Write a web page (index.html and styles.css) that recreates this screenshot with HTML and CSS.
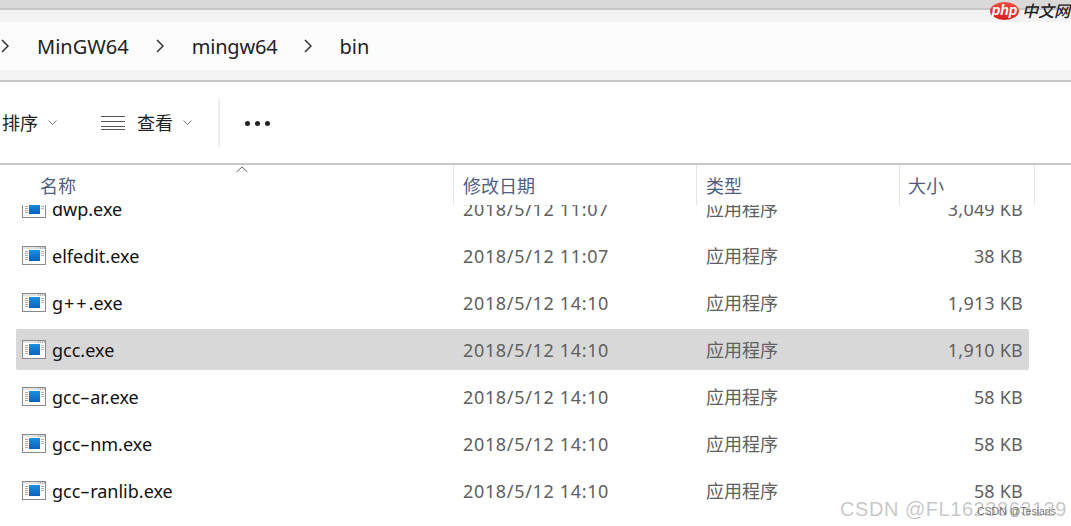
FILE: index.html
```html
<!DOCTYPE html>
<html lang="zh-CN">
<head>
<meta charset="utf-8">
<title>bin</title>
<link rel="stylesheet" href="styles.css">
</head>
<body>
<svg class="defs" width="0" height="0" aria-hidden="true">
  <defs>
    <linearGradient id="blue" x1="0" y1="0" x2="0" y2="1"><stop offset="0" stop-color="#1c8fe0"/><stop offset="1" stop-color="#0a62b8"/></linearGradient>
    <symbol id="exe" viewBox="0 0 24 19">
      <rect x="0.5" y="0.5" width="23" height="18" fill="#fdfdfd" stroke="#8a8a8a"/>
      <rect x="1" y="1" width="22" height="2" fill="#e4e4e4"/>
      <path d="M16 2h1M18 2h1M20 2h1M22 2h1" stroke="#8a8a8a"/>
      <path d="M3 5.500h3M3 7.500h3M3 9.500h3M3 11.500h3M3 13.500h3" stroke="#a8a8a8"/>
      <path d="M19 5.500h3M19 7.500h3M19 9.500h3" stroke="#b4b4b4"/>
      <rect x="7" y="4" width="11" height="11" fill="url(#blue)"/>
    </symbol>
  </defs>
</svg>

<header class="titlebar"></header>

<nav class="addressbar">
  <div class="crumbs">
    <svg class="sep sep-first" viewBox="0 0 8 14"><path d="M1 1l6 6-6 6"/></svg>
    <span class="crumb">MinGW64</span>
    <svg class="sep" viewBox="0 0 8 14"><path d="M1 1l6 6-6 6"/></svg>
    <span class="crumb crumb-tight">mingw64</span>
    <svg class="sep" viewBox="0 0 8 14"><path d="M1 1l6 6-6 6"/></svg>
    <span class="crumb">bin</span>
  </div>
</nav>

<section class="toolbar">
  <span class="tool-label tool-sort">排序</span>
  <svg class="caret" viewBox="0 0 9 5"><path d="M0.500 0.500l4 4 4-4"/></svg>
  <svg class="lines" viewBox="0 0 24 16"><path d="M0 1.500h24M0 6.500h24M0 11.500h24M0 14.500h24"/></svg>
  <span class="tool-label">查看</span>
  <svg class="caret" viewBox="0 0 9 5"><path d="M0.500 0.500l4 4 4-4"/></svg>
  <div class="divider"></div>
  <div class="more"><i></i><i></i><i></i></div>
</section>

<section class="table">
  <svg class="sort-arrow" viewBox="0 0 12 7"><path d="M0.500 6l5.500-5 5.500 5"/></svg>
  <div class="thead">
    <div class="th c-name">名称</div>
    <div class="th c-date">修改日期</div>
    <div class="th c-type">类型</div>
    <div class="th c-size">大小</div>
    <div class="th c-end"></div>
  </div>
  <div class="tbody">
    <div class="row"><div class="c-name name"><svg class="icon"><use href="#exe"/></svg>dwp.exe</div><div class="c-date cell">2018/5/12 11:07</div><div class="c-type cell">应用程序</div><div class="c-size cell">3,049 KB</div></div>
    <div class="row"><div class="c-name name"><svg class="icon"><use href="#exe"/></svg>elfedit.exe</div><div class="c-date cell">2018/5/12 11:07</div><div class="c-type cell">应用程序</div><div class="c-size cell">38 KB</div></div>
    <div class="row"><div class="c-name name"><svg class="icon"><use href="#exe"/></svg><span>g<span class="plus">++</span>.exe</span></div><div class="c-date cell">2018/5/12 14:10</div><div class="c-type cell">应用程序</div><div class="c-size cell">1,913 KB</div></div>
    <div class="row selected"><div class="c-name name"><svg class="icon"><use href="#exe"/></svg>gcc.exe</div><div class="c-date cell">2018/5/12 14:10</div><div class="c-type cell">应用程序</div><div class="c-size cell">1,910 KB</div></div>
    <div class="row"><div class="c-name name"><svg class="icon"><use href="#exe"/></svg><span>gcc<span class="hyphen">-</span>ar.exe</span></div><div class="c-date cell">2018/5/12 14:10</div><div class="c-type cell">应用程序</div><div class="c-size cell">58 KB</div></div>
    <div class="row"><div class="c-name name"><svg class="icon"><use href="#exe"/></svg><span>gcc<span class="hyphen">-</span>nm.exe</span></div><div class="c-date cell">2018/5/12 14:10</div><div class="c-type cell">应用程序</div><div class="c-size cell">58 KB</div></div>
    <div class="row"><div class="c-name name"><svg class="icon"><use href="#exe"/></svg><span>gcc<span class="hyphen">-</span>ranlib.exe</span></div><div class="c-date cell">2018/5/12 14:10</div><div class="c-type cell">应用程序</div><div class="c-size cell">58 KB</div></div>
  </div>
</section>

<div class="php-mark"><span class="php-badge">php</span><span class="php-text">中文网</span></div>
<div class="wm-csdn">CSDN @FL1623863129</div>
<div class="wm-small">CSDN @Tesiaris</div>
</body>
</html>
```

FILE: styles.css
```css
* { box-sizing: border-box; }
html, body { margin: 0; padding: 0; }
body {
  width: 1071px;
  height: 526px;
  overflow: hidden;
  position: relative;
  background: #fff;
  color: #1a1a1a;
  font-family: "Noto Sans", "Noto Sans CJK SC", sans-serif;
}
.defs { position: absolute; }

.titlebar {
  height: 10px;
  background: #d9d9d9;
  border-bottom: 2px solid #c6c6c6;
}

.addressbar {
  height: 72px;
  background: #f3f3f3;
  border-bottom: 2px solid #c8c8c8;
  padding-top: 12px;
}
.crumbs {
  height: 48px;
  background: #fcfcfc;
  display: flex;
  align-items: center;
  font-size: 20px;
  color: #222;
}
.sep { width: 8px; height: 14px; flex: none; fill: none; stroke: #333; stroke-width: 1.5; margin: 0 27px 0 27px; }
.sep-first { margin-left: 1px; margin-right: 28px; }
.crumb { display: block; }
.crumb-tight { margin-left: 1px; letter-spacing: -0.2px; }

.toolbar {
  height: 83px;
  border-bottom: 2px solid #c8c8c8;
  display: flex;
  align-items: center;
  font-size: 18px;
  color: #222;
}
.tool-label { font-family: "Noto Sans CJK SC", sans-serif; font-size: 18px; margin-top: -2px; }
.tool-sort { margin-left: 2px; }
.caret { width: 9px; height: 5px; fill: none; stroke: #777; stroke-width: 1; margin-left: 10px; flex: none; }
.lines { width: 24px; height: 16px; fill: none; stroke: #555; stroke-width: 1.2; margin-left: 44px; margin-right: 12px; flex: none; }
.divider { width: 2px; height: 48px; background: #eeeeee; margin-left: 26px; }
.more { display: flex; gap: 5px; margin-left: 25px; margin-top: 1px; }
.more i { display: block; width: 5px; height: 5px; border-radius: 50%; background: #222; }

.table { position: relative; }
.sort-arrow { position: absolute; left: 236px; top: 1px; width: 12px; height: 7px; fill: none; stroke: #666; stroke-width: 1; }
.thead { display: flex; height: 40px; }
.th {
  font-family: "Noto Sans CJK SC", sans-serif;
  font-size: 18px;
  color: #4d6082;
  padding-top: 7px;
  line-height: 26px;
}
.c-name { width: 453px; flex: none; }
.c-date { width: 243px; flex: none; }
.c-type { width: 203px; flex: none; }
.c-size { width: 135px; flex: none; }
.c-end { width: 1px; flex: none; }
.th.c-name { padding-left: 40px; }
.th.c-date { padding-left: 9px; border-left: 1px solid #e5e5e5; }
.th.c-type { padding-left: 9px; border-left: 1px solid #e5e5e5; }
.th.c-size { padding-left: 8px; border-left: 1px solid #e5e5e5; }
.th.c-end { border-left: 1px solid #e5e5e5; }

.tbody { height: 321px; overflow: hidden; display: flex; flex-direction: column; gap: 6px; }
.row {
  height: 41px;
  flex: none;
  display: flex;
  align-items: center;
  margin-left: 16px;
  width: 1013px;
  border-radius: 2px;
  font-size: 18px;
  color: #606060;
}
.row:first-child { margin-top: -17px; }
.row.selected { background: #d8d8d8; }
.row .c-name { width: 438px; }
.name { display: flex; align-items: center; color: #111; font-size: 18px; padding-left: 6px; }
.plus { letter-spacing: 2px; margin-left: 1px; }
.hyphen { display: inline-block; margin: 0 2px; transform: scaleX(1.7); }
.icon { width: 24px; height: 19px; margin-right: 6px; flex: none; margin-top: -1px; }
.cell { padding-left: 9px; white-space: nowrap; font-size: 18px; }
.row .c-date { letter-spacing: 0.66px; }
.row .c-type { font-family: "Noto Sans CJK SC", sans-serif; margin-top: -2px; }
.row .c-size { width: 129px; padding: 0 6px 0 0; text-align: right; letter-spacing: 0.2px; }

.php-mark { position: absolute; left: 990px; top: 1px; display: flex; align-items: center; height: 19px; }
.php-badge {
  width: 29px; height: 18px; border-radius: 50%;
  background: linear-gradient(#f04a3e, #d9201f);
  color: #fff;
  font: italic 700 14px/16px "Liberation Sans", sans-serif;
  text-align: center;
}
.php-text { margin-left: 3px; font: italic 500 16px/19px "Noto Sans CJK SC", sans-serif; color: #222; }

.wm-csdn {
  position: absolute; left: 840px; top: 497px;
  font: 20px/24px "Liberation Sans", sans-serif;
  letter-spacing: 0.55px;
  color: rgba(130,130,130,0.45);
  white-space: nowrap;
}
.wm-small {
  position: absolute; left: 977px; top: 504px;
  font: 10.5px/14px "Liberation Sans", sans-serif;
  color: rgba(70,70,70,0.75);
  white-space: nowrap;
}
```
